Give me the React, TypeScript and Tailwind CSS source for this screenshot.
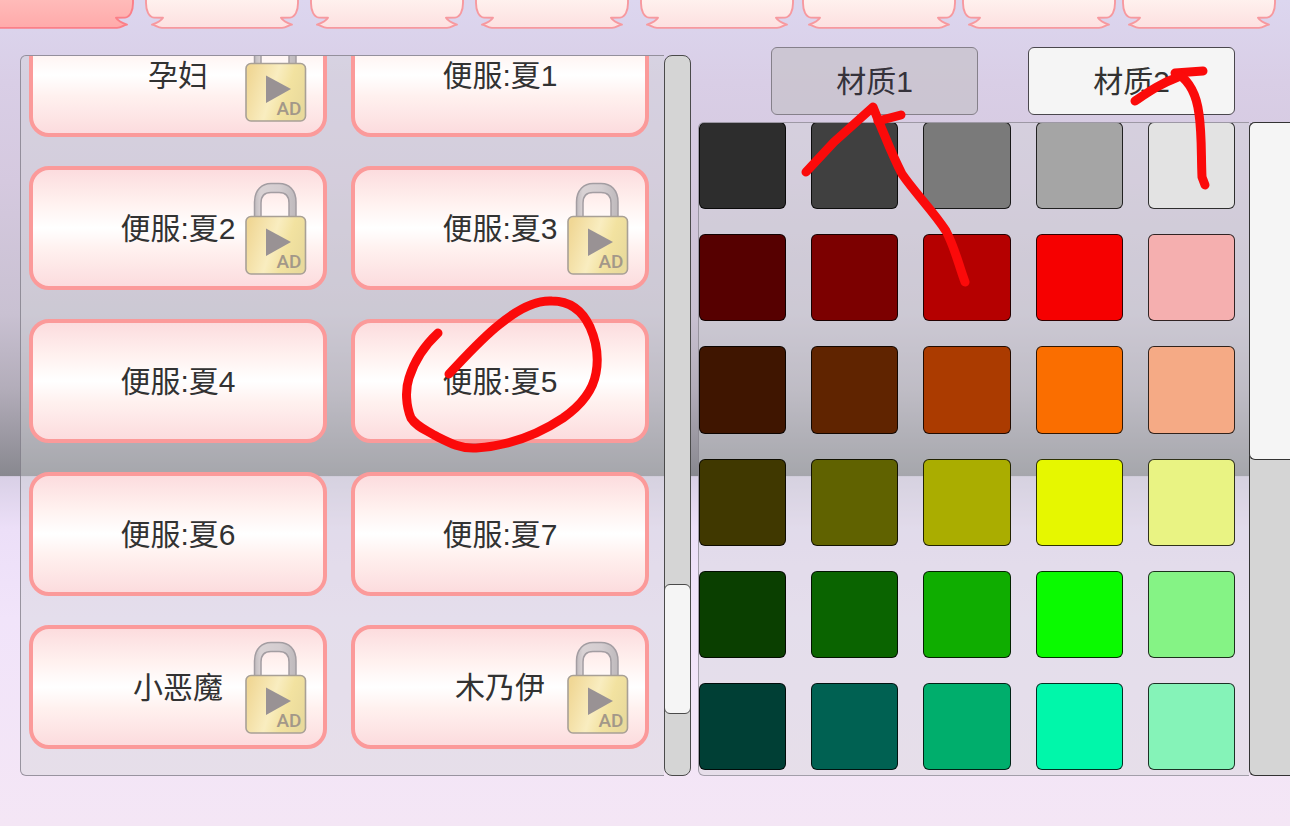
import React, { useState } from "react";

const outfits = [
  { name: "孕妇", locked: true },
  { name: "便服:夏1", locked: false },
  { name: "便服:夏2", locked: true },
  { name: "便服:夏3", locked: true },
  { name: "便服:夏4", locked: false },
  { name: "便服:夏5", locked: false },
  { name: "便服:夏6", locked: false },
  { name: "便服:夏7", locked: false },
  { name: "小恶魔", locked: true },
  { name: "木乃伊", locked: true },
];

const swatches = [
  "#2d2d2d", "#404040", "#7a7a7a", "#a5a5a5", "#e3e3e3",
  "#560000", "#7c0000", "#b50000", "#f60000", "#f5afaf",
  "#3f1500", "#602400", "#ab3b00", "#fa6e00", "#f5aa85",
  "#403800", "#606200", "#aaad00", "#e6f700", "#e9f383",
  "#0a3f00", "#0a6400", "#0fad00", "#0afa00", "#85f385",
  "#003f35", "#006152", "#00ae6c", "#00f7aa", "#85f3b8",
];

const categories = [
  { id: 1, spacing: "" },
  { id: 2, spacing: "ml-[11px]" },
  { id: 3, spacing: "ml-[11px]" },
  { id: 4, spacing: "ml-[11px]" },
  { id: 5, spacing: "ml-[11px]" },
  { id: 6, spacing: "ml-2" },
  { id: 7, spacing: "ml-1.5" },
  { id: 8, spacing: "ml-1.5" },
];

const materials = ["材质1", "材质2"];

function RibbonShape({ active }: { active: boolean }) {
  const id = active ? "ribbon-on" : "ribbon-off";
  return (
    <svg viewBox="0 0 154 30" preserveAspectRatio="none" className="block h-full w-full" aria-hidden="true">
      <defs>
        <linearGradient id={id} x1="0" y1="0" x2="0" y2="1">
          <stop offset="0" stopColor={active ? "#ffbdbb" : "#fff3f0"} />
          <stop offset="1" stopColor={active ? "#ffaaaa" : "#fde0e0"} />
        </linearGradient>
      </defs>
      <path
        d="M1 -4V3C1 11 4 17 9 17.6L18 17.8C16 21 12 23 7 24.6C11 25 12 27.7 17 27.9H137C142 27.7 143 25 147 24.6C142 23 138 21 136 17.8L145 17.6C150 17 153 11 153 3V-4Z"
        fill={`url(#${id})`}
        stroke={active ? "#fb7f88" : "#f7999f"}
        strokeWidth="1.9"
        strokeLinejoin="round"
      />
    </svg>
  );
}

function AdLock() {
  return (
    <svg viewBox="0 0 62 93" className="absolute right-4 top-3 h-[93px] w-[62px]" aria-hidden="true">
      <defs>
        <linearGradient id="lock-body" x1="0" y1="0.3" x2="1" y2="0.6">
          <stop offset="0" stopColor="#f0d795" />
          <stop offset="0.45" stopColor="#f9edc0" />
          <stop offset="0.7" stopColor="#f2e2a0" />
          <stop offset="1" stopColor="#e9da9c" />
        </linearGradient>
        <linearGradient id="lock-shackle" x1="0" y1="0" x2="1" y2="0">
          <stop offset="0" stopColor="#c0bbbe" />
          <stop offset="0.15" stopColor="#d9d2d4" />
          <stop offset="0.6" stopColor="#d4cdd0" />
          <stop offset="1" stopColor="#beb9bc" />
        </linearGradient>
      </defs>
      <path
        d="M9.5 36V20C9.5 8 17 1.5 26 1.5H34C44 1.5 51 8 51 20V36H44V21C44 14 40 10.5 34 10.5H26C20 10.5 16 14 16 21V36Z"
        fill="url(#lock-shackle)"
        stroke="#a39da2"
        strokeWidth="1.5"
      />
      <rect x="1" y="34.5" width="59.5" height="57.5" rx="5" fill="url(#lock-body)" stroke="#a8a096" strokeWidth="1.6" />
      <path d="M21 46.5V74L46 60Z" fill="#999294" />
      <text
        x="44"
        y="86"
        textAnchor="middle"
        fontSize="19"
        fontWeight="500"
        fill="#a39889"
        className="font-[Roboto,sans-serif]"
      >
        AD
      </text>
    </svg>
  );
}

function Strokes() {
  return (
    <svg
      viewBox="0 0 1290 826"
      preserveAspectRatio="none"
      className="pointer-events-none absolute inset-0 h-full w-full"
      fill="none"
      stroke="#fb0a0a"
      strokeWidth="9"
      strokeLinecap="round"
      strokeLinejoin="round"
      aria-hidden="true"
    >
      <path d="M438 333C424 346 414 362 409 378C405 390 406 406 411 418C416 426 424 429 434 435C448 442 460 449 476 448C506 446 536 436 563 418C583 404 593 390 596 373C599 357 597 343 590 327C582 310 570 301 552 301C535 300 517 310 500 324C482 338 466 356 449 374" />
      <path d="M806 172L834 142L873 107L879 122C887 141 893 157 902 174C915 193 934 212 946 231C955 248 958 263 965 282" />
      <path d="M878 121L901 115" />
      <path d="M1135 101C1150 91 1160 84 1178 77L1175 73L1203 71" />
      <path d="M1178 74C1192 83 1197 98 1199 114C1202 135 1201 155 1202 177L1205 185" />
    </svg>
  );
}

export default function App() {
  const [category, setCategory] = useState(1);
  const [outfit, setOutfit] = useState("便服:夏5");
  const [material, setMaterial] = useState("材质1");
  const [color, setColor] = useState("");

  return (
    <div className="relative flex h-screen flex-col overflow-hidden bg-[linear-gradient(180deg,#dcd6ef_0%,#d9cee6_10%,#d5c9df_22%,#c9c1d2_38%,#b3adba_47%,#88888f_57.6%,#d9d0e6_57.7%,#ecdff8_64%,#f1e4fa_75%,#f4e6f5_100%)] font-['Liberation_Sans','Noto_Sans_CJK_SC',sans-serif] text-[30px] text-[#323232]">
      {/* Category ribbons */}
      <nav className="-ml-5 mr-3.5 flex h-[30px] shrink-0">
        {categories.map((item) => (
          <button
            key={item.id}
            aria-label={`分类${item.id}`}
            onClick={() => setCategory(item.id)}
            className={`min-w-0 flex-1 ${item.spacing}`}
          >
            <RibbonShape active={category === item.id} />
          </button>
        ))}
      </nav>

      <main className="grid min-h-0 flex-1 grid-cols-[671fr_592fr] grid-rows-[minmax(0,1fr)] gap-[7px] pb-[50px] pl-5 pt-[17px]">
        {/* Outfit list */}
        <section className="mt-2 flex min-w-0">
          <div className="min-w-0 flex-1 overflow-hidden rounded-l-md border border-r-0 border-[#77737f]/70 bg-[#d2d4d6]/40 pl-2 pr-[15px]">
            <div className="-mt-[43px] grid grid-cols-2 gap-x-6 gap-y-[29px]">
              {outfits.map((item) => (
                <button
                  key={item.name}
                  aria-pressed={outfit === item.name}
                  onClick={() => setOutfit(item.name)}
                  className="relative flex h-[124px] items-center justify-center rounded-[20px] border-4 border-[#fb9a9a] bg-[linear-gradient(180deg,#fcdcde_0%,#fff1ef_28%,#ffffff_50%,#fff1ef_68%,#fcdcde_100%)]"
                >
                  {item.name}
                  {item.locked && <AdLock />}
                </button>
              ))}
            </div>
          </div>
          <div className="flex w-[27px] flex-col overflow-hidden rounded-lg border border-[#4a4a4a] bg-[#d5d5d5]">
            <div className="flex-[529]" />
            <div className="-mx-px flex-[129] rounded-md border border-[#4a4a4a] bg-[#f5f5f5]" />
            <div className="flex-[61]" />
          </div>
        </section>

        {/* Material and colour picker */}
        <section className="flex min-w-0 flex-col">
          <div className="flex shrink-0 gap-[50px] pl-[73px] pr-[55px]">
            {materials.map((item) => (
              <button
                key={item}
                aria-pressed={material === item}
                onClick={() => setMaterial(item)}
                className={`h-[68px] min-w-0 flex-1 rounded-md border ${
                  material === item
                    ? "border-[#85808a] bg-[#c8c3cd]/80 text-[#35323b]"
                    : "border-[#4a474d] bg-[#f5f5f5]"
                }`}
              >
                {item}
              </button>
            ))}
          </div>

          <div className="mt-[7px] flex min-h-0 flex-1">
            <div className="min-w-0 flex-1 overflow-hidden rounded-l-md border border-r-0 border-[#77737f]/60 bg-[#d2d4d6]/40 pr-[14px]">
              <div className="-mt-px grid grid-cols-5 gap-[25px]">
                {swatches.map((item) => (
                  <button
                    key={item}
                    aria-label={item}
                    aria-pressed={color === item}
                    onClick={() => setColor(item)}
                    className="aspect-square rounded-md border border-black/80"
                    style={{ backgroundColor: item }}
                  />
                ))}
              </div>
            </div>
            <div className="flex w-[41px] flex-col rounded-l-md border border-r-0 border-[#333333] bg-[#d5d5d5]">
              <div className="-ml-px -mt-px flex-[338] rounded-l-md border border-r-0 border-[#333333] bg-[#f5f5f5]" />
              <div className="flex-[317]" />
            </div>
          </div>
        </section>
      </main>

      <Strokes />
    </div>
  );
}
